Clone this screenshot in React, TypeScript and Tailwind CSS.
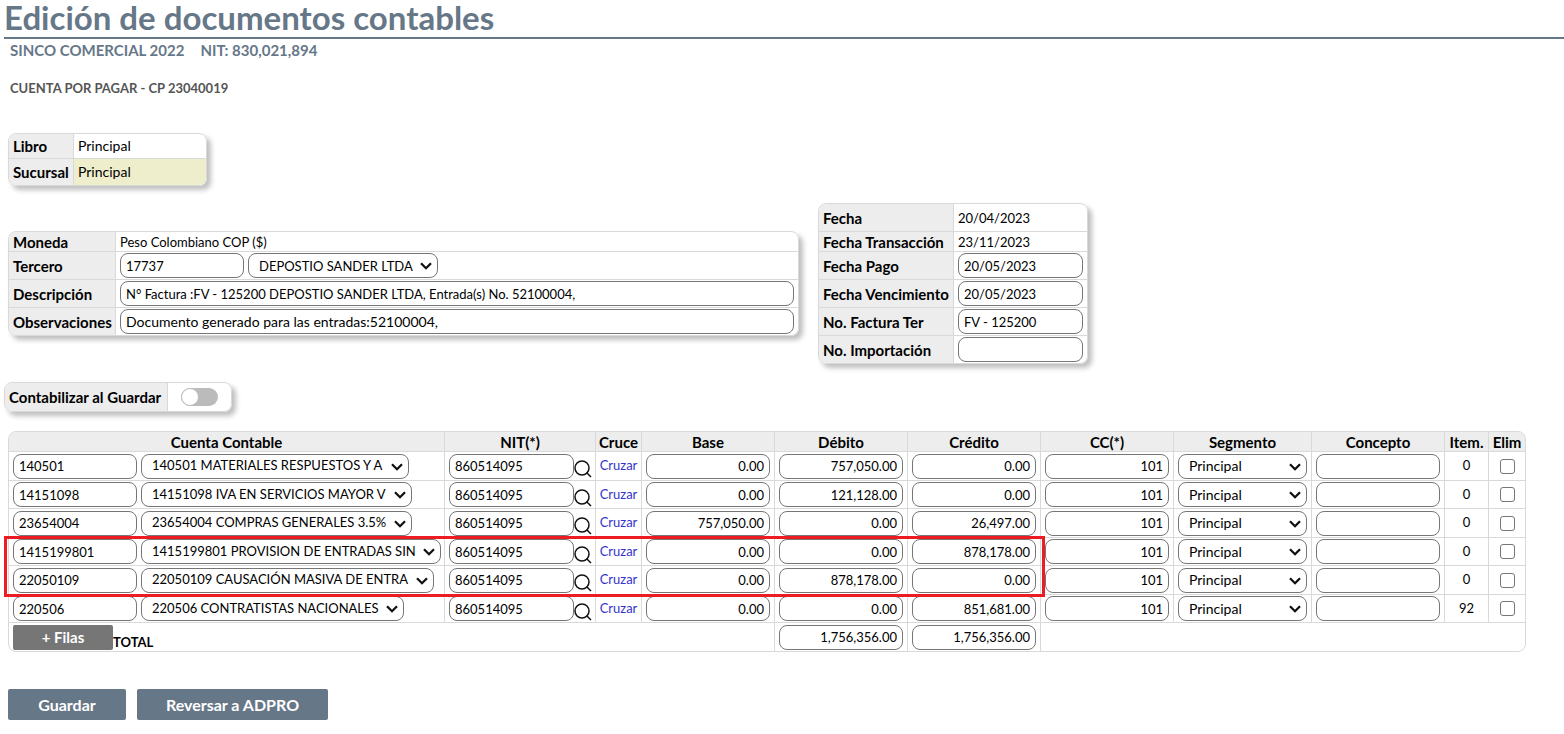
import type { ReactNode } from "react";

type Row = {
  cuenta: string;
  nombre: string;
  base: string;
  debito: string;
  credito: string;
  item: number;
};

const NIT = "860514095";

const rows: Row[] = [
  { cuenta: "140501", nombre: "140501 MATERIALES RESPUESTOS Y A", base: "0.00", debito: "757,050.00", credito: "0.00", item: 0 },
  { cuenta: "14151098", nombre: "14151098 IVA EN SERVICIOS MAYOR V", base: "0.00", debito: "121,128.00", credito: "0.00", item: 0 },
  { cuenta: "23654004", nombre: "23654004 COMPRAS GENERALES 3.5%", base: "757,050.00", debito: "0.00", credito: "26,497.00", item: 0 },
  { cuenta: "1415199801", nombre: "1415199801 PROVISION DE ENTRADAS SIN", base: "0.00", debito: "0.00", credito: "878,178.00", item: 0 },
  { cuenta: "22050109", nombre: "22050109 CAUSACIÓN MASIVA DE ENTRA", base: "0.00", debito: "878,178.00", credito: "0.00", item: 0 },
  { cuenta: "220506", nombre: "220506 CONTRATISTAS NACIONALES", base: "0.00", debito: "0.00", credito: "851,681.00", item: 92 },
];

const columns = [
  { title: "Cuenta Contable", width: "w-auto" },
  { title: "NIT(*)", width: "w-[151px]" },
  { title: "Cruce", width: "w-[46px]" },
  { title: "Base", width: "w-[133px]" },
  { title: "Débito", width: "w-[133px]" },
  { title: "Crédito", width: "w-[133px]" },
  { title: "CC(*)", width: "w-[133px]" },
  { title: "Segmento", width: "w-[138px]" },
  { title: "Concepto", width: "w-[133px]" },
  { title: "Item.", width: "w-[44px]" },
  { title: "Elim", width: "w-[36px]" },
];

const field = "block h-[25px] rounded-lg border border-[#767676] bg-white px-[5px]";
const cell = "border-b border-r border-[#d9d9d9] px-1 last:border-r-0";

function TextField({ label, id, value = "", className = "" }: { label?: string; id?: string; value?: string; className?: string }) {
  return <input id={id} type="text" aria-label={label} defaultValue={value} className={`${field} ${className}`} />;
}

function SelectField({ label, value, selectClass = "" }: { label: string; value: string; selectClass?: string }) {
  return (
    <span className="relative block">
      <select
        aria-label={label}
        className={`block h-[25px] appearance-none rounded-lg border border-[#767676] bg-white pr-6 pl-[10px] ${selectClass}`}
      >
        <option>{value}</option>
      </select>
      <svg viewBox="0 0 12 8" className="pointer-events-none absolute top-[9px] right-[6px] h-2 w-3" fill="none" stroke="#111" strokeWidth="2.3">
        <path d="M1 1.2 6 6.2 11 1.2" />
      </svg>
    </span>
  );
}

function Panel({ className = "", children }: { className?: string; children: ReactNode }) {
  return (
    <div className={`overflow-hidden rounded-lg border border-[#d9d9d9] shadow-[4px_4px_5px_rgba(0,0,0,0.25)] ${className}`}>
      <table className="w-full border-separate border-spacing-0">
        <tbody>{children}</tbody>
      </table>
    </div>
  );
}

function PanelRow({ label, htmlFor, labelWidth, height = "h-7", last = false, valueClass = "", children }: {
  label: string;
  htmlFor?: string;
  labelWidth: string;
  height?: string;
  last?: boolean;
  valueClass?: string;
  children: ReactNode;
}) {
  const line = last ? "" : "border-b";
  return (
    <tr className={height}>
      <th scope="row" className={`border-r border-[#d9d9d9] bg-[#ededed] pl-1 text-left text-[15px] leading-4 font-bold whitespace-nowrap ${line} ${labelWidth}`}>
        {htmlFor ? <label htmlFor={htmlFor}>{label}</label> : label}
      </th>
      <td className={`border-[#d9d9d9] px-1 leading-4 ${line} ${valueClass}`}>{children}</td>
    </tr>
  );
}

function SearchIcon() {
  return (
    <svg viewBox="0 0 18 18" className="h-[18px] w-[18px]" fill="none" stroke="#111" strokeWidth="1.5">
      <circle cx="8" cy="8" r="7" />
      <path d="M12.5 12.5 17 17" />
    </svg>
  );
}

export default function App() {
  return (
    <main className="bg-white pl-1 font-['Lato','Liberation_Sans',sans-serif] text-[13px] text-black">
      <h1 className="h-[39px] border-b-2 border-[#667788] text-[33px] leading-[34px] font-bold text-[#667788]">
        Edición de documentos contables
      </h1>
      <div className="flex gap-4 px-[6px] pt-px text-[15px] leading-5 font-bold text-[#667788]">
        <span>SINCO COMERCIAL 2022</span>
        <span>NIT: 830,021,894</span>
      </div>
      <h2 className="px-[6px] pt-5 text-[13px] leading-4 font-bold text-[#555]">CUENTA POR PAGAR - CP 23040019</h2>

      <Panel className="mt-[37px] ml-1 w-[199px]">
        <PanelRow label="Libro" labelWidth="w-[65px]" height="h-[25px]" valueClass="text-sm">Principal</PanelRow>
        <PanelRow label="Sucursal" labelWidth="w-[65px]" height="h-[26px]" valueClass="bg-[#eeeecc] text-sm" last>Principal</PanelRow>
      </Panel>

      <div className="mt-[17px] ml-1 flex items-center gap-[19px]">
        <Panel className="w-[791px]">
          <PanelRow label="Moneda" labelWidth="w-[107px]" height="h-5">Peso Colombiano COP ($)</PanelRow>
          <PanelRow label="Tercero" htmlFor="tercero" labelWidth="w-[107px]">
            <div className="flex gap-1">
              <TextField id="tercero" value="17737" className="w-[124px]" />
              <SelectField label="Nombre del tercero" value="DEPOSTIO SANDER LTDA" />
            </div>
          </PanelRow>
          <PanelRow label="Descripción" htmlFor="descripcion" labelWidth="w-[107px]">
            <TextField id="descripcion" value="N° Factura :FV - 125200 DEPOSTIO SANDER LTDA, Entrada(s) No. 52100004," className="w-full" />
          </PanelRow>
          <PanelRow label="Observaciones" htmlFor="observaciones" labelWidth="w-[107px]" height="h-[27px]" last>
            <TextField id="observaciones" value="Documento generado para las entradas:52100004," className="w-full text-sm" />
          </PanelRow>
        </Panel>

        <Panel className="w-[270px]">
          <PanelRow label="Fecha" labelWidth="w-[135px]">20/04/2023</PanelRow>
          <PanelRow label="Fecha Transacción" labelWidth="w-[135px]" height="h-5">23/11/2023</PanelRow>
          <PanelRow label="Fecha Pago" htmlFor="pago" labelWidth="w-[135px]">
            <TextField id="pago" value="20/05/2023" className="w-full" />
          </PanelRow>
          <PanelRow label="Fecha Vencimiento" htmlFor="vencimiento" labelWidth="w-[135px]">
            <TextField id="vencimiento" value="20/05/2023" className="w-full" />
          </PanelRow>
          <PanelRow label="No. Factura Ter" htmlFor="factura" labelWidth="w-[135px]">
            <TextField id="factura" value="FV - 125200" className="w-full" />
          </PanelRow>
          <PanelRow label="No. Importación" htmlFor="importacion" labelWidth="w-[135px]" height="h-[27px]" last>
            <TextField id="importacion" className="w-full" />
          </PanelRow>
        </Panel>
      </div>

      <Panel className="mt-[18px] w-[228px]">
        <PanelRow label="Contabilizar al Guardar" htmlFor="contabilizar" labelWidth="w-[163px]" last>
          <input
            id="contabilizar"
            type="checkbox"
            role="switch"
            className="mx-auto block h-[18px] w-[37px] appearance-none rounded-full bg-[#bbb] before:block before:size-[18px] before:rounded-full before:border before:border-[#bbb] before:bg-white checked:bg-[#667788] checked:before:ml-auto"
          />
        </PanelRow>
      </Panel>

      <div className="relative mt-[19px] mr-[38px] ml-1">
        <div className="overflow-hidden rounded-lg border border-[#d9d9d9]">
          <table className="w-full table-fixed border-separate border-spacing-0">
            <thead>
              <tr className="h-5">
                {columns.map((column) => (
                  <th key={column.title} className={`border-r border-b border-[#d9d9d9] bg-[#ededed] text-[15px] leading-4 font-bold last:border-r-0 ${column.width}`}>
                    {column.title}
                  </th>
                ))}
              </tr>
            </thead>
            <tbody>
              {rows.map((row) => (
                <tr key={row.cuenta} className="odd:h-[29px] even:h-7">
                  <td className={cell}>
                    <div className="flex gap-1">
                      <TextField label="Cuenta" value={row.cuenta} className="w-[124px] shrink-0" />
                      <SelectField label="Cuenta contable" value={row.nombre} />
                    </div>
                  </td>
                  <td className="border-r border-b border-[#d9d9d9] pl-1">
                    <div className="flex items-center">
                      <TextField label="NIT" value={NIT} className="w-[125px]" />
                      <button type="button" aria-label="Buscar NIT" className="pt-[6px]">
                        <SearchIcon />
                      </button>
                    </div>
                  </td>
                  <td className="border-r border-b border-[#d9d9d9] text-center">
                    <a href="#cruzar" className="text-[#3333cc]">Cruzar</a>
                  </td>
                  <td className={cell}>
                    <TextField label="Base" value={row.base} className="w-full text-right" />
                  </td>
                  <td className={cell}>
                    <TextField label="Débito" value={row.debito} className="w-full text-right" />
                  </td>
                  <td className={cell}>
                    <TextField label="Crédito" value={row.credito} className="w-full text-right" />
                  </td>
                  <td className={cell}>
                    <TextField label="CC" value="101" className="w-full text-right" />
                  </td>
                  <td className={cell}>
                    <SelectField label="Segmento" value="Principal" selectClass="w-full text-sm" />
                  </td>
                  <td className={cell}>
                    <TextField label="Concepto" className="w-full" />
                  </td>
                  <td className={`${cell} text-center`}>{row.item}</td>
                  <td className={cell}>
                    <input type="checkbox" aria-label="Eliminar" className="mx-auto block size-[15px] appearance-none rounded-[3px] border border-[#767676] bg-white checked:bg-[#667788]" />
                  </td>
                </tr>
              ))}
            </tbody>
            <tfoot>
              <tr className="h-7">
                <td colSpan={4} className="border-r border-[#d9d9d9] px-1">
                  <div className="flex items-end">
                    <button type="button" className="h-[25px] w-[100px] rounded-xs bg-[#767676] text-[15px] font-bold text-white">+ Filas</button>
                    <span className="leading-4 font-bold">TOTAL</span>
                  </div>
                </td>
                <td className="border-r border-[#d9d9d9] px-1">
                  <TextField label="Total débito" value="1,756,356.00" className="w-full text-right" />
                </td>
                <td className="border-r border-[#d9d9d9] px-1">
                  <TextField label="Total crédito" value="1,756,356.00" className="w-full text-right" />
                </td>
                <td colSpan={5} />
              </tr>
            </tfoot>
          </table>
        </div>
        {/* Marks the two provision entries */}
        <div className="pointer-events-none absolute top-[105px] right-[481px] -left-1 h-[61px] border-3 border-[#ed1c24]" />
      </div>

      <div className="mt-[37px] ml-1 flex gap-[11px] pb-3 text-base font-bold text-white">
        <button type="button" className="h-[31px] w-[118px] rounded-xs bg-[#667788]">Guardar</button>
        <button type="button" className="h-[31px] w-[191px] rounded-xs bg-[#667788]">Reversar a ADPRO</button>
      </div>
    </main>
  );
}
